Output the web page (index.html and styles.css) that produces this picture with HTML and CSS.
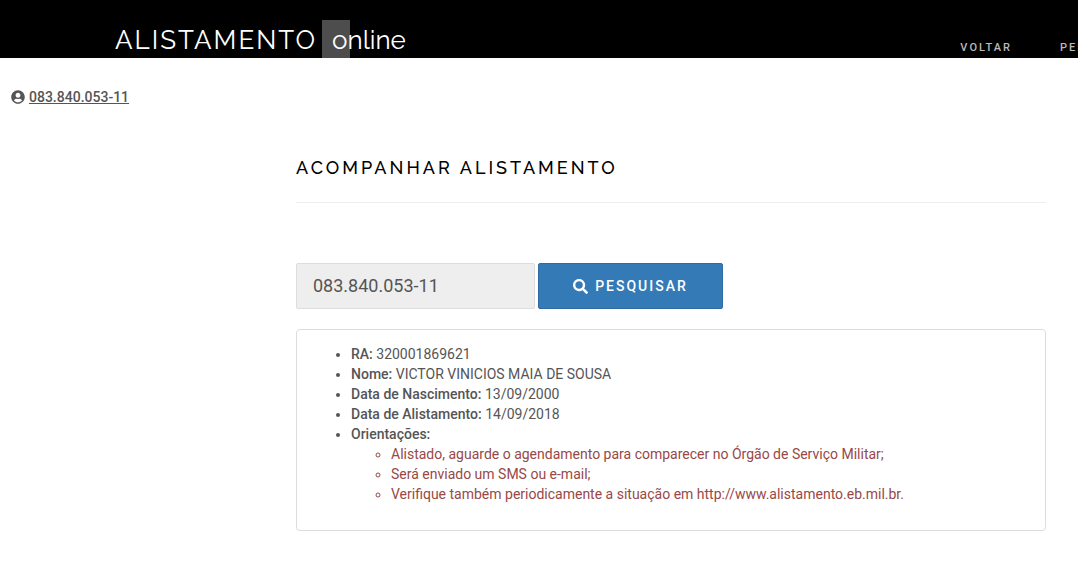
FILE: index.html
```html
<!DOCTYPE html>
<html lang="pt-BR">
<head>
<meta charset="utf-8">
<meta name="viewport" content="width=device-width, initial-scale=1">
<title>Alistamento online</title>
<link rel="stylesheet" href="styles.css">
</head>
<body>
<header class="topbar">
  <a class="brand" href="#"><span class="brand-name">ALISTAMENTO</span><span class="brand-suffix">online</span></a>
  <nav class="menu">
    <a href="#">VOLTAR</a>
    <a href="#">PER</a>
  </nav>
</header>
<div class="user">
  <svg class="user-icon" viewBox="0 0 496 512" aria-hidden="true"><path fill="currentColor" d="M248 8C111 8 0 119 0 256s111 248 248 248 248-111 248-248S385 8 248 8zm0 96c48.600 0 88 39.400 88 88s-39.400 88-88 88-88-39.400-88-88 39.400-88 88-88zm0 344c-58.700 0-111.300-26.600-146.500-68.200 18.800-35.400 55.600-59.800 98.500-59.800 2.400 0 4.800.4 7.100 1.100 13 4.200 26.600 6.900 40.900 6.900s28-2.700 40.900-6.900c2.300-.7 4.700-1.100 7.100-1.100 42.900 0 79.700 24.400 98.500 59.800C359.300 421.400 306.700 448 248 448z"/></svg>
  <a href="#">083.840.053-11</a>
</div>
<main class="content">
  <h1 class="title">ACOMPANHAR ALISTAMENTO</h1>
  <form class="search">
    <input class="search-input" type="text" value="083.840.053-11" aria-label="CPF" readonly>
    <button class="search-button" type="button">
      <svg class="search-icon" viewBox="0 0 512 512" aria-hidden="true"><path fill="currentColor" d="M505 442.700L405.300 343c-4.500-4.500-10.600-7-17-7H372c27.600-35.300 44-79.700 44-128C416 93.100 322.900 0 208 0S0 93.100 0 208s93.100 208 208 208c48.300 0 92.700-16.400 128-44v16.300c0 6.400 2.500 12.500 7 17l99.700 99.700c9.400 9.400 24.600 9.400 33.900 0l28.300-28.300c9.400-9.400 9.400-24.600.1-34zM208 336c-70.700 0-128-57.200-128-128 0-70.700 57.200-128 128-128 70.700 0 128 57.200 128 128 0 70.700-57.200 128-128 128z"/></svg>
      <span>PESQUISAR</span>
    </button>
  </form>
  <section class="panel">
    <ul class="details">
      <li><strong>RA:</strong> 320001869621</li>
      <li><strong>Nome:</strong> VICTOR VINICIOS MAIA DE SOUSA</li>
      <li><strong>Data de Nascimento:</strong> 13/09/2000</li>
      <li><strong>Data de Alistamento:</strong> 14/09/2018</li>
      <li><strong>Orientações:</strong>
        <ul class="notes">
          <li>Alistado, aguarde o agendamento para comparecer no Órgão de Serviço Militar;</li>
          <li>Será enviado um SMS ou e-mail;</li>
          <li>Verifique também periodicamente a situação em http://www.alistamento.eb.mil.br.</li>
        </ul>
      </li>
    </ul>
  </section>
</main>
</body>
</html>
```
FILE: styles.css
```css
* {
  box-sizing: border-box;
}

body {
  margin: 0;
  background: #fff;
  color: #555;
  font: 400 14px/20px Roboto, sans-serif;
}

.topbar {
  display: flex;
  justify-content: space-between;
  align-items: flex-end;
  height: 58px;
  padding-left: 115px;
  overflow: hidden;
  background: #000;
}

.brand {
  display: flex;
  color: #fff;
  font: 400 26px/36px Raleway, Lato, sans-serif;
  text-decoration: none;
}

.brand-name {
  padding-top: 2px;
  letter-spacing: 2px;
}

.brand-suffix {
  margin-left: 5px;
  padding: 2px 0 0 10px;
  background: linear-gradient(#4d4d4d, #4d4d4d) no-repeat left / 28px 100%;
}

.menu {
  display: flex;
  gap: 48px;
}

.menu a {
  color: #bbb;
  font: 500 11px/20px Roboto, sans-serif;
  letter-spacing: 2px;
  text-decoration: none;
}

.menu a:last-child {
  width: 18px;
}

.user {
  display: flex;
  align-items: center;
  gap: 4px;
  padding: 29px 11px 0;
  font-weight: 500;
}

.user a {
  color: inherit;
}

.user-icon {
  width: 14px;
  height: 14px;
}

.content {
  margin: 48px 32px 0 296px;
}

.title {
  margin: 0 0 60px;
  padding-bottom: 22px;
  border-bottom: 1px solid #eee;
  color: #000;
  font: 500 18px/25px Raleway, Lato, sans-serif;
  letter-spacing: 3px;
}

.search {
  display: flex;
  gap: 3px;
  margin-bottom: 20px;
}

.search-input {
  width: 239px;
  height: 46px;
  padding: 0 16px 2px;
  border: 1px solid #ddd;
  border-radius: 2px;
  background: #eee;
  color: #555;
  font: 400 18px/24px Roboto, sans-serif;
}

.search-button {
  display: flex;
  justify-content: center;
  align-items: center;
  gap: 7px;
  width: 185px;
  height: 46px;
  border: 1px solid #2e6da4;
  border-radius: 2px;
  background: #337ab7;
  color: #fff;
  font: 500 14px/20px Roboto, sans-serif;
  letter-spacing: 2px;
}

.search-icon {
  width: 15px;
  height: 15px;
}

.panel {
  padding: 14px 14px 26px;
  border: 1px solid #ddd;
  border-radius: 4px;
  box-shadow: 0 1px 1px rgba(0, 0, 0, 0.05);
}

.details,
.notes {
  margin: 0;
  padding-left: 40px;
}

.details strong {
  font-weight: 500;
}

.notes {
  color: #984846;
}
```
